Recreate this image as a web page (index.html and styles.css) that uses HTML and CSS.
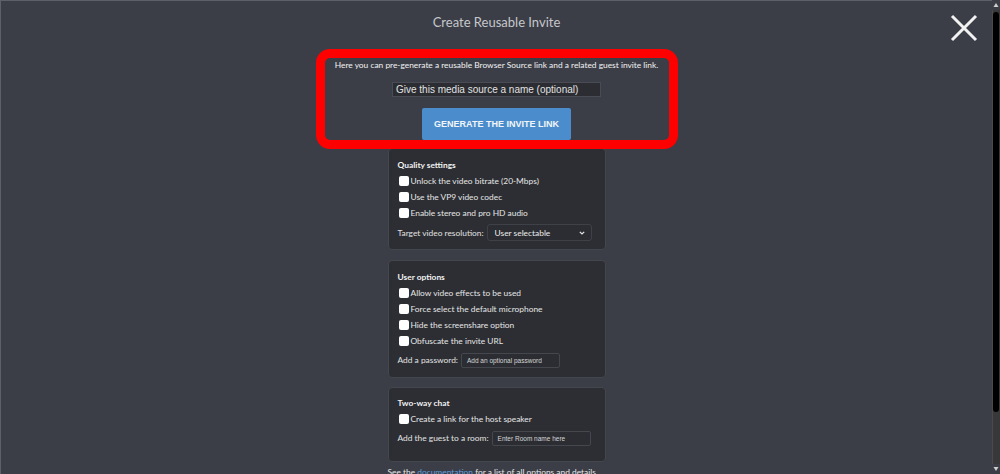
FILE: index.html
```html
<!DOCTYPE html>
<html lang="en">
<head>
<meta charset="utf-8">
<title>Create Reusable Invite</title>
<link rel="stylesheet" href="styles.css">
</head>
<body>
<main class="page">
  <h1 class="title">Create Reusable Invite</h1>
  <p class="intro">Here you can pre-generate a reusable Browser Source link and a related guest invite link.</p>
  <div class="name-field">Give this media source a name (optional)</div>
  <button class="generate" type="button">GENERATE THE INVITE LINK</button>

  <section class="card card-quality">
    <h3>Quality settings</h3>
    <div class="check"><span class="box"></span>Unlock the video bitrate (20-Mbps)</div>
    <div class="check"><span class="box"></span>Use the VP9 video codec</div>
    <div class="check"><span class="box"></span>Enable stereo and pro HD audio</div>
    <div class="field-row">
      <span>Target video resolution:</span>
      <div class="select">
        <span>User selectable</span>
        <svg class="chev" width="6" height="4" viewBox="0 0 6 4"><path d="M0.8 0.8 L3 3 L5.2 0.8" fill="none" stroke="#e6e6e6" stroke-width="1.2"/></svg>
      </div>
    </div>
  </section>

  <section class="card card-user">
    <h3>User options</h3>
    <div class="check"><span class="box"></span>Allow video effects to be used</div>
    <div class="check"><span class="box"></span>Force select the default microphone</div>
    <div class="check"><span class="box"></span>Hide the screenshare option</div>
    <div class="check"><span class="box"></span>Obfuscate the invite URL</div>
    <div class="field-row">
      <span>Add a password:</span>
      <div class="text-field">Add an optional password</div>
    </div>
  </section>

  <section class="card card-chat">
    <h3>Two-way chat</h3>
    <div class="check"><span class="box"></span>Create a link for the host speaker</div>
    <div class="field-row">
      <span>Add the guest to a room:</span>
      <div class="text-field">Enter Room name here</div>
    </div>
  </section>

  <p class="footnote">See the <a href="#">documentation</a> for a list of all options and details.</p>
</main>

<div class="annotation"></div>
<button class="close" type="button" aria-label="Close">
  <svg width="28" height="28" viewBox="0 0 28 28"><path d="M2 2 L26 26 M26 2 L2 26" stroke="#f2f2f2" stroke-width="3" fill="none"/></svg>
</button>

<div class="scrollbar" aria-hidden="true">
  <div class="sb-arrow"><svg width="8" height="10" viewBox="0 0 8 10"><path d="M4 3 L6.5 7 L1.5 7 Z" fill="#cfcfcf"/></svg></div>
  <div class="sb-track"><div class="sb-thumb"></div></div>
  <div class="sb-arrow"><svg width="8" height="10" viewBox="0 0 8 10"><path d="M1.5 3 L6.5 3 L4 7 Z" fill="#cfcfcf"/></svg></div>
</div>
</body>
</html>
```
FILE: styles.css
```css
html {
  background: #3b3e47;
  border-top: 1px solid #5d6069;
  border-left: 1px solid #5d6069;
  height: 473px;
  overflow: hidden;
}

body {
  margin: 0 8px 0 0;
  font-family: Lato, "Liberation Sans", sans-serif;
  font-size: 8.4px;
  color: #e6e6e6;
}

.page {
  display: flex;
  flex-direction: column;
  align-items: center;
}

.title {
  margin: 0;
  padding-top: 12px;
  line-height: 18px;
  font-size: 13px;
  font-weight: normal;
  color: #c6c7cb;
}

.intro {
  margin: 28px 0 0;
  line-height: 12px;
  font-size: 8.4px;
  color: #f2f2f2;
}

.name-field {
  margin-top: 11px;
  width: 209px;
  height: 15px;
  box-sizing: border-box;
  border: 1px solid #494c54;
  background: #2b2d32;
  font-family: "Liberation Sans", Arial, sans-serif;
  font-size: 10px;
  line-height: 13px;
  color: #e2e2e2;
  padding: 0 3px;
  white-space: nowrap;
}

.generate {
  margin-top: 11px;
  width: 149px;
  height: 32px;
  border: 0;
  border-radius: 2px;
  background: #4b8dcc;
  color: #f2f5f8;
  font-family: "Liberation Sans", Arial, sans-serif;
  font-weight: bold;
  font-size: 9px;
  padding: 0;
}

.card {
  width: 218px;
  box-sizing: border-box;
  border: 1px solid #45474e;
  border-radius: 4px;
  background: #2c2e33;
  padding: 8px 9px 8px;
  line-height: 16px;
}

.card-quality { margin-top: 8px; }
.card-user { margin-top: 10px; padding-bottom: 9px; }
.card-chat { margin-top: 9px; padding-top: 7px; padding-bottom: 15px; }

.card h3 {
  margin: 0;
  font-size: 8.4px;
  font-weight: bold;
  line-height: 16px;
  color: #f2f2f2;
}

.check {
  display: flex;
  align-items: center;
  height: 16px;
  white-space: nowrap;
}

.box {
  width: 10px;
  height: 10px;
  margin-left: 1px;
  margin-right: 2px;
  border-radius: 2px;
  background: #ffffff;
  flex: none;
}

.field-row {
  display: flex;
  align-items: center;
  gap: 3px;
  margin-top: 3px;
  white-space: nowrap;
  color: #e2e2e2;
}

.select {
  width: 105px;
  height: 17px;
  box-sizing: border-box;
  border: 1px solid #3f4148;
  border-radius: 3px;
  background: #2b2d32;
  display: flex;
  align-items: center;
  justify-content: space-between;
  padding: 0 6px 0 7px;
  color: #ececec;
}

.text-field {
  width: 99px;
  height: 15px;
  box-sizing: border-box;
  border: 1px solid #45474e;
  border-radius: 2px;
  background: #2b2d32;
  font-family: "Liberation Sans", Arial, sans-serif;
  font-size: 6.5px;
  line-height: 13px;
  padding: 0 5px;
  color: #d6d6d6;
}

.footnote {
  margin: 4px 0 0;
  width: 218px;
  line-height: 12px;
  color: #e6e6e6;
  white-space: nowrap;
}

.footnote a {
  color: #5f9fdc;
  text-decoration: none;
}

.annotation {
  position: absolute;
  left: 316px;
  top: 49px;
  width: 362px;
  height: 100px;
  box-sizing: border-box;
  border: 9px solid #fe0000;
  border-radius: 14px;
  pointer-events: none;
}

.close {
  position: absolute;
  top: 14px;
  right: 22px;
  width: 28px;
  height: 28px;
  padding: 0;
  border: 0;
  background: none;
}

.close svg { display: block; }

.scrollbar {
  position: absolute;
  top: 0;
  left: 992px;
  width: 8px;
  height: 474px;
  background: #3b3e47;
}

.sb-arrow {
  display: block;
  width: 8px;
  height: 10px;
}

.sb-arrow svg { display: block; }

.sb-track {
  display: block;
  width: 8px;
  height: 454px;
  background: #38383b;
  box-shadow: inset 1px 0 0 #4a4a4e;
  padding-top: 2px;
  box-sizing: border-box;
}

.sb-thumb {
  display: block;
  width: 6px;
  height: 400px;
  margin-left: 1px;
  background: #000000;
  border-radius: 3px;
}
```
